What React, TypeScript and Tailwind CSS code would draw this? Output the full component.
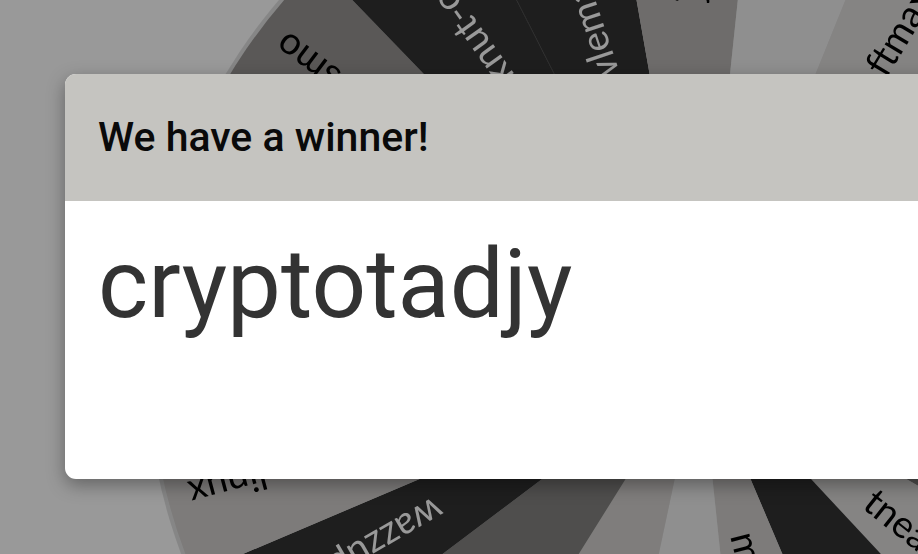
import React from 'react';

// wheel behind the winner dialog (drawn in its own colours, dimmed by the overlay)
interface Segment {
  a0: number;
  a1: number;
  fill: string;
  label: string;
  dark?: boolean;
}

const CX = 700;
const CY = 360;
const R = 550;

const segments: Segment[] = [
  { a0: -175, a1: -152, fill: '#d0cdcb', label: 'rubberduck' },
  { a0: -152, a1: -134, fill: '#969391', label: 'cosmo' },
  { a0: -134, a1: -117, fill: '#323232', label: 'knut-ocean', dark: true },
  { a0: -117, a1: -100, fill: '#333333', label: 'bowlemaniac999', dark: true },
  { a0: -100, a1: -84, fill: '#b7b4b2', label: 'jellybean7' },
  { a0: -84, a1: -68, fill: '#eeeeee', label: 'bob' },
  { a0: -68, a1: -50, fill: '#dedcdb', label: 'ftmaxxer99' },
  { a0: -50, a1: -30, fill: '#323232', label: 'nova', dark: true },
  { a0: -30, a1: -10, fill: '#969391', label: 'pepper' },
  { a0: -10, a1: 10, fill: '#eeeeee', label: 'lumen' },
  { a0: 10, a1: 30, fill: '#848280', label: 'orbit' },
  { a0: 30, a1: 47, fill: '#dedcdb', label: 'tneatwheelspinner' },
  { a0: 47, a1: 67, fill: '#323232', label: 'kai', dark: true },
  { a0: 67, a1: 84, fill: '#d0cdcb', label: 'mrkrabsmoneymaker' },
  { a0: 84, a1: 102, fill: '#eeeeee', label: 'alexandra' },
  { a0: 102, a1: 122, fill: '#d4d1cf', label: 'pixel' },
  { a0: 122, a1: 143, fill: '#848280', label: 'zed' },
  { a0: 143, a1: 157, fill: '#323232', label: 'wazzupbuddy', dark: true },
  { a0: 157, a1: 173, fill: '#d0cdcb', label: 'linux' },
  { a0: 173, a1: 185, fill: '#eeeeee', label: 'q' }];

function point(angle: number, r: number) {
  const rad = (angle * Math.PI) / 180;
  return [CX + r * Math.cos(rad), CY + r * Math.sin(rad)];
}

function sectorPath(a0: number, a1: number) {
  const [x0, y0] = point(a0, R);
  const [x1, y1] = point(a1, R);
  return `M ${CX} ${CY} L ${x0} ${y0} A ${R} ${R} 0 0 1 ${x1} ${y1} Z`;
}

function Wheel() {
  const [lx, ly] = point(-117, R);
  return (
    <svg
      className="absolute inset-0 blur-[0.6px]"
      width={918}
      height={554}
      viewBox="0 0 918 554">

      <circle cx={CX} cy={CY} r={R + 4} fill="rgba(0,0,0,0.12)" />
      {segments.map((s) =>
      <path key={s.label} d={sectorPath(s.a0, s.a1)} fill={s.fill} />
      )}
      {/* faint seam between the two dark slices */}
      <line x1={CX} y1={CY} x2={lx} y2={ly} stroke="#4a4a4a" strokeWidth={1} />
      {segments.map((s) =>
      <text
        key={s.label + '-t'}
        x={CX + R - 22}
        y={CY}
        textAnchor="end"
        dominantBaseline="central"
        fontSize={38}
        fontFamily="Lato, 'Noto Sans', sans-serif"
        fill={s.dark ? '#ffffff' : '#000000'}
        transform={`rotate(${(s.a0 + s.a1) / 2} ${CX} ${CY})`}>

          {s.label}
        </text>
      )}
    </svg>);

}

export default function App() {
  return (
    <div className="relative h-[554px] w-[918px] overflow-hidden bg-white font-['Roboto',sans-serif]">
      <Wheel />

      {/* Dim overlay */}
      <div className="absolute inset-0 bg-black/40" />

      {/* Winner dialog */}
      <div className="relative pl-[65px] pt-[74px]">
        <div className="w-[960px] overflow-hidden rounded-[11px] bg-white shadow-[0_6px_18px_rgba(0,0,0,0.35)]">
          <div className="flex h-[127px] items-center bg-[#c5c4c0] px-[33px]">
            <h2 className="text-[41px] font-medium leading-none text-[#0a0a0a]">
              We have a winner!
            </h2>
          </div>
          <div className="h-[278px] px-[33px] pt-[35px]">
            <p className="text-[96px] leading-none text-[#333333]">cryptotadjy</p>
          </div>
        </div>
      </div>
    </div>);

}
